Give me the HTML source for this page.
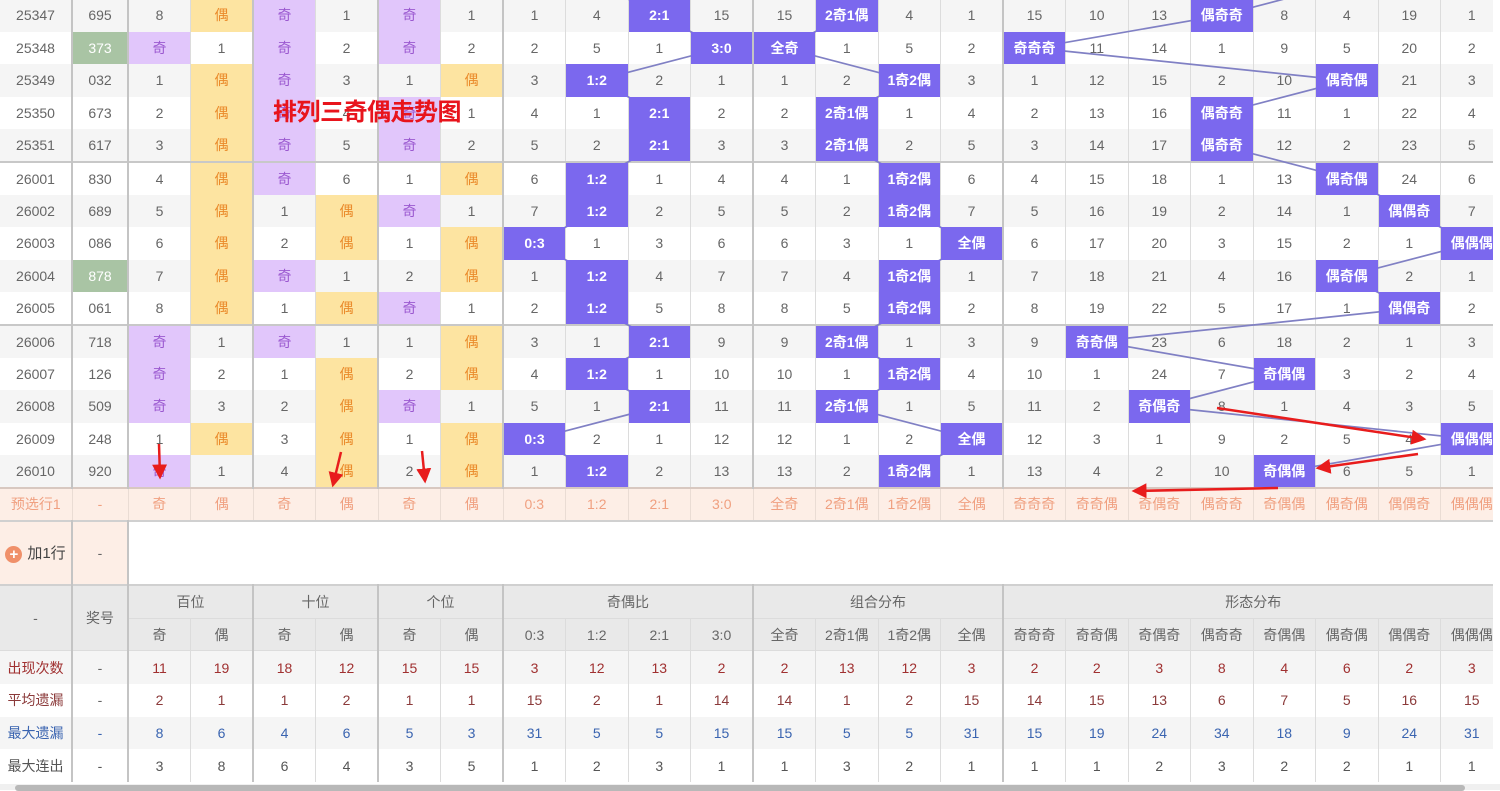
<!DOCTYPE html>
<html><head><meta charset="utf-8">
<style>
html,body{margin:0;padding:0;background:#fff;width:1500px;height:790px;overflow:hidden}
#w{position:absolute;left:0;top:-1px;width:1493px;height:785px;overflow:hidden}
table{border-collapse:collapse;table-layout:fixed;width:1503px;font-family:"Liberation Sans","Noto Sans CJK SC",sans-serif;font-size:14px;color:#666}
td{text-align:center;padding:0;border-right:1px solid #dcdcdc;white-space:nowrap;overflow:hidden}
tr.d{height:32.6px}
tr.d:nth-child(odd){background:#f5f5f5}
tr.d td:nth-child(1),tr.d td:nth-child(2),tr.d td:nth-child(4),tr.d td:nth-child(6),tr.d td:nth-child(8),tr.d td:nth-child(12),tr.d td:nth-child(16){border-right:2px solid #c4c4c4}
tr.gb{border-bottom:2px solid #c8c8c8}
td.t{border-right:2px solid #c4c4c4}
.o{background:#e1c6fb;color:#9b59d0}
.e{background:#fde4a1;color:#ea8a2a}
.g{background:#a9c4a4;color:#fff}
.b{background:#7b68ee;color:#fff;font-weight:bold;position:relative;z-index:2}
tr.p{height:33px;background:#fdeee6;color:#f0a080;border-top:2px solid #d8c8c0;border-bottom:2px solid #d0d0d0}
tr.p td{border-right:1px solid #eadcd4}
tr.a{height:64px}
tr.h{background:#e9e9e9;color:#666}
tr.h td{border-bottom:1px solid #dcdcdc}
tr.s{height:32.8px}
tr.s:nth-child(even){background:#f5f5f5}
.c1{color:#a03030}.c2{color:#8b3a3a}.c3{color:#3a64b0}.c4{color:#555}
svg{position:absolute;left:0;top:0;z-index:1;pointer-events:none}
#title{position:absolute;left:273px;top:93px;z-index:5;color:#e8141c;font:bold 24px "Liberation Sans","Noto Sans CJK SC",sans-serif;letter-spacing:-0.5px}
#sb{position:absolute;left:0;top:784px;width:1500px;height:6px;background:#f0f0f0}
#sb div{position:absolute;left:15px;top:1px;width:1450px;height:6px;background:#b8b8b8;border-radius:3px}
.plus{display:inline-block;width:17px;height:17px;border-radius:50%;background:#f0906a;color:#fff;font-size:15px;line-height:17px;font-weight:bold;vertical-align:middle;margin-right:5px}
</style></head><body>
<div id="w">
<table>
<colgroup><col style="width:72px"><col style="width:56px"><col span="22" style="width:62.5px"></colgroup>
<tr class="d"><td>25347</td><td>695</td><td>8</td><td class="e">偶</td><td class="o">奇</td><td>1</td><td class="o">奇</td><td>1</td><td>1</td><td>4</td><td class="b">2:1</td><td>15</td><td>15</td><td class="b">2奇1偶</td><td>4</td><td>1</td><td>15</td><td>10</td><td>13</td><td class="b">偶奇奇</td><td>8</td><td>4</td><td>19</td><td>1</td></tr>
<tr class="d"><td>25348</td><td class="g">373</td><td class="o">奇</td><td>1</td><td class="o">奇</td><td>2</td><td class="o">奇</td><td>2</td><td>2</td><td>5</td><td>1</td><td class="b">3:0</td><td class="b">全奇</td><td>1</td><td>5</td><td>2</td><td class="b">奇奇奇</td><td>11</td><td>14</td><td>1</td><td>9</td><td>5</td><td>20</td><td>2</td></tr>
<tr class="d"><td>25349</td><td>032</td><td>1</td><td class="e">偶</td><td class="o">奇</td><td>3</td><td>1</td><td class="e">偶</td><td>3</td><td class="b">1:2</td><td>2</td><td>1</td><td>1</td><td>2</td><td class="b">1奇2偶</td><td>3</td><td>1</td><td>12</td><td>15</td><td>2</td><td>10</td><td class="b">偶奇偶</td><td>21</td><td>3</td></tr>
<tr class="d"><td>25350</td><td>673</td><td>2</td><td class="e">偶</td><td class="o">奇</td><td>4</td><td class="o">奇</td><td>1</td><td>4</td><td>1</td><td class="b">2:1</td><td>2</td><td>2</td><td class="b">2奇1偶</td><td>1</td><td>4</td><td>2</td><td>13</td><td>16</td><td class="b">偶奇奇</td><td>11</td><td>1</td><td>22</td><td>4</td></tr>
<tr class="d gb"><td>25351</td><td>617</td><td>3</td><td class="e">偶</td><td class="o">奇</td><td>5</td><td class="o">奇</td><td>2</td><td>5</td><td>2</td><td class="b">2:1</td><td>3</td><td>3</td><td class="b">2奇1偶</td><td>2</td><td>5</td><td>3</td><td>14</td><td>17</td><td class="b">偶奇奇</td><td>12</td><td>2</td><td>23</td><td>5</td></tr>
<tr class="d"><td>26001</td><td>830</td><td>4</td><td class="e">偶</td><td class="o">奇</td><td>6</td><td>1</td><td class="e">偶</td><td>6</td><td class="b">1:2</td><td>1</td><td>4</td><td>4</td><td>1</td><td class="b">1奇2偶</td><td>6</td><td>4</td><td>15</td><td>18</td><td>1</td><td>13</td><td class="b">偶奇偶</td><td>24</td><td>6</td></tr>
<tr class="d"><td>26002</td><td>689</td><td>5</td><td class="e">偶</td><td>1</td><td class="e">偶</td><td class="o">奇</td><td>1</td><td>7</td><td class="b">1:2</td><td>2</td><td>5</td><td>5</td><td>2</td><td class="b">1奇2偶</td><td>7</td><td>5</td><td>16</td><td>19</td><td>2</td><td>14</td><td>1</td><td class="b">偶偶奇</td><td>7</td></tr>
<tr class="d"><td>26003</td><td>086</td><td>6</td><td class="e">偶</td><td>2</td><td class="e">偶</td><td>1</td><td class="e">偶</td><td class="b">0:3</td><td>1</td><td>3</td><td>6</td><td>6</td><td>3</td><td>1</td><td class="b">全偶</td><td>6</td><td>17</td><td>20</td><td>3</td><td>15</td><td>2</td><td>1</td><td class="b">偶偶偶</td></tr>
<tr class="d"><td>26004</td><td class="g">878</td><td>7</td><td class="e">偶</td><td class="o">奇</td><td>1</td><td>2</td><td class="e">偶</td><td>1</td><td class="b">1:2</td><td>4</td><td>7</td><td>7</td><td>4</td><td class="b">1奇2偶</td><td>1</td><td>7</td><td>18</td><td>21</td><td>4</td><td>16</td><td class="b">偶奇偶</td><td>2</td><td>1</td></tr>
<tr class="d gb"><td>26005</td><td>061</td><td>8</td><td class="e">偶</td><td>1</td><td class="e">偶</td><td class="o">奇</td><td>1</td><td>2</td><td class="b">1:2</td><td>5</td><td>8</td><td>8</td><td>5</td><td class="b">1奇2偶</td><td>2</td><td>8</td><td>19</td><td>22</td><td>5</td><td>17</td><td>1</td><td class="b">偶偶奇</td><td>2</td></tr>
<tr class="d"><td>26006</td><td>718</td><td class="o">奇</td><td>1</td><td class="o">奇</td><td>1</td><td>1</td><td class="e">偶</td><td>3</td><td>1</td><td class="b">2:1</td><td>9</td><td>9</td><td class="b">2奇1偶</td><td>1</td><td>3</td><td>9</td><td class="b">奇奇偶</td><td>23</td><td>6</td><td>18</td><td>2</td><td>1</td><td>3</td></tr>
<tr class="d"><td>26007</td><td>126</td><td class="o">奇</td><td>2</td><td>1</td><td class="e">偶</td><td>2</td><td class="e">偶</td><td>4</td><td class="b">1:2</td><td>1</td><td>10</td><td>10</td><td>1</td><td class="b">1奇2偶</td><td>4</td><td>10</td><td>1</td><td>24</td><td>7</td><td class="b">奇偶偶</td><td>3</td><td>2</td><td>4</td></tr>
<tr class="d"><td>26008</td><td>509</td><td class="o">奇</td><td>3</td><td>2</td><td class="e">偶</td><td class="o">奇</td><td>1</td><td>5</td><td>1</td><td class="b">2:1</td><td>11</td><td>11</td><td class="b">2奇1偶</td><td>1</td><td>5</td><td>11</td><td>2</td><td class="b">奇偶奇</td><td>8</td><td>1</td><td>4</td><td>3</td><td>5</td></tr>
<tr class="d"><td>26009</td><td>248</td><td>1</td><td class="e">偶</td><td>3</td><td class="e">偶</td><td>1</td><td class="e">偶</td><td class="b">0:3</td><td>2</td><td>1</td><td>12</td><td>12</td><td>1</td><td>2</td><td class="b">全偶</td><td>12</td><td>3</td><td>1</td><td>9</td><td>2</td><td>5</td><td>4</td><td class="b">偶偶偶</td></tr>
<tr class="d"><td>26010</td><td>920</td><td class="o">奇</td><td>1</td><td>4</td><td class="e">偶</td><td>2</td><td class="e">偶</td><td>1</td><td class="b">1:2</td><td>2</td><td>13</td><td>13</td><td>2</td><td class="b">1奇2偶</td><td>1</td><td>13</td><td>4</td><td>2</td><td>10</td><td class="b">奇偶偶</td><td>6</td><td>5</td><td>1</td></tr>
<tr class="p"><td class="t">预选行1</td><td class="t">-</td><td>奇</td><td class="t">偶</td><td>奇</td><td class="t">偶</td><td>奇</td><td class="t">偶</td><td>0:3</td><td>1:2</td><td>2:1</td><td class="t">3:0</td><td>全奇</td><td>2奇1偶</td><td>1奇2偶</td><td class="t">全偶</td><td>奇奇奇</td><td>奇奇偶</td><td>奇偶奇</td><td>偶奇奇</td><td>奇偶偶</td><td>偶奇偶</td><td>偶偶奇</td><td>偶偶偶</td></tr>
<tr class="a" style="border-bottom:2px solid #d0d0d0"><td class="t" style="background:#fdeee6;color:#444;font-size:15px"><span class="plus">+</span>加1行</td><td class="t" style="background:#fdeee6">-</td><td colspan="22" style="border-right:none"></td></tr>
<tr class="h" style="height:34px"><td rowspan="2" class="t">-</td><td rowspan="2" class="t">奖号</td><td colspan="2" class="t">百位</td><td colspan="2" class="t">十位</td><td colspan="2" class="t">个位</td><td colspan="4" class="t">奇偶比</td><td colspan="4" class="t">组合分布</td><td colspan="8">形态分布</td></tr>
<tr class="h" style="height:32px"><td>奇</td><td class="t">偶</td><td>奇</td><td class="t">偶</td><td>奇</td><td class="t">偶</td><td>0:3</td><td>1:2</td><td>2:1</td><td class="t">3:0</td><td>全奇</td><td>2奇1偶</td><td>1奇2偶</td><td class="t">全偶</td><td>奇奇奇</td><td>奇奇偶</td><td>奇偶奇</td><td>偶奇奇</td><td>奇偶偶</td><td>偶奇偶</td><td>偶偶奇</td><td>偶偶偶</td></tr>
<tr class="s c1"><td class="t">出现次数</td><td class="t" style="color:#666">-</td><td>11</td><td class="t">19</td><td>18</td><td class="t">12</td><td>15</td><td class="t">15</td><td>3</td><td>12</td><td>13</td><td class="t">2</td><td>2</td><td>13</td><td>12</td><td class="t">3</td><td>2</td><td>2</td><td>3</td><td>8</td><td>4</td><td>6</td><td>2</td><td>3</td></tr>
<tr class="s c2"><td class="t">平均遗漏</td><td class="t" style="color:#666">-</td><td>2</td><td class="t">1</td><td>1</td><td class="t">2</td><td>1</td><td class="t">1</td><td>15</td><td>2</td><td>1</td><td class="t">14</td><td>14</td><td>1</td><td>2</td><td class="t">15</td><td>14</td><td>15</td><td>13</td><td>6</td><td>7</td><td>5</td><td>16</td><td>15</td></tr>
<tr class="s c3"><td class="t">最大遗漏</td><td class="t">-</td><td>8</td><td class="t">6</td><td>4</td><td class="t">6</td><td>5</td><td class="t">3</td><td>31</td><td>5</td><td>5</td><td class="t">15</td><td>15</td><td>5</td><td>5</td><td class="t">31</td><td>15</td><td>19</td><td>24</td><td>34</td><td>18</td><td>9</td><td>24</td><td>31</td></tr>
<tr class="s c4"><td class="t">最大连出</td><td class="t">-</td><td>3</td><td class="t">8</td><td>6</td><td class="t">4</td><td>3</td><td class="t">5</td><td>1</td><td>2</td><td>3</td><td class="t">1</td><td>1</td><td>3</td><td>2</td><td class="t">1</td><td>1</td><td>1</td><td>2</td><td>3</td><td>2</td><td>2</td><td>1</td><td>1</td></tr>
</table>
<svg width="1503" height="790" viewBox="0 -1 1503 790">
<g fill="none" stroke="#8080c4" stroke-width="1.7">
<polyline points="596.75,-17.3 659.25,15.3 721.75,47.9 596.75,80.5 659.25,113.1 659.25,145.7 596.75,178.3 596.75,210.9 534.25,243.5 596.75,276.1 596.75,308.7 659.25,341.3 596.75,373.9 659.25,406.5 534.25,439.1 596.75,471.7"/>
<polyline points="909.25,-17.3 846.75,15.3 784.25,47.9 909.25,80.5 846.75,113.1 846.75,145.7 909.25,178.3 909.25,210.9 971.75,243.5 909.25,276.1 909.25,308.7 846.75,341.3 909.25,373.9 846.75,406.5 971.75,439.1 909.25,471.7"/>
<polyline points="1346.75,-17.3 1221.75,15.3 1034.25,47.9 1346.75,80.5 1221.75,113.1 1221.75,145.7 1346.75,178.3 1409.25,210.9 1471.75,243.5 1346.75,276.1 1409.25,308.7 1096.75,341.3 1284.25,373.9 1159.25,406.5 1471.75,439.1 1284.25,471.7"/>
</g>
</svg>
<svg width="1503" height="790" style="z-index:4">
<defs><marker id="ah" markerWidth="6" markerHeight="6" refX="5" refY="3" orient="auto" markerUnits="strokeWidth"><path d="M0,0 L6,3 L0,6 z" fill="#e81c1c"/></marker></defs>
<g stroke="#e81c1c" stroke-width="2.5" fill="none" marker-end="url(#ah)">
<line x1="159" y1="445" x2="160" y2="478"/>
<line x1="341" y1="453" x2="333" y2="486"/>
<line x1="422" y1="452" x2="425" y2="482"/>
<line x1="1217" y1="409" x2="1424" y2="440"/>
<line x1="1418" y1="455" x2="1318" y2="469"/>
<line x1="1278" y1="489" x2="1134" y2="492"/>
</g>
</svg>
<div id="title">排列三奇偶走势图</div>
</div>
<div id="sb"><div></div></div>
</body></html>
